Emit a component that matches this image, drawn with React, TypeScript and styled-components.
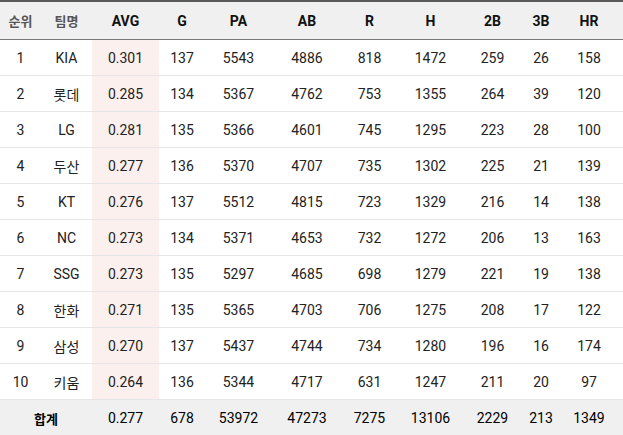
import React from "react";
import styled, { createGlobalStyle } from "styled-components";

const Global = createGlobalStyle`
  html, body { margin: 0; padding: 0; background: #fff; }
  body { font-family: Roboto, "Noto Sans CJK KR", sans-serif; }
`;

const Table = styled.table`
  width: 623px;
  border-collapse: collapse;
  table-layout: fixed;
  border-top: 2px solid #5a5a5a;
  font-family: Roboto, "Noto Sans CJK KR", sans-serif;
  font-size: 14px;
  color: #222;
`;

const HeadCell = styled.th<{ $ko?: boolean; $pr?: number }>`
  height: 37px;
  padding: 0 ${(p) => p.$pr ?? 0}px 0 0;
  background: #f0f0f0;
  border-bottom: 1px solid #7a7a7a;
  text-align: center;
  font-weight: 700;
  font-size: ${(p) => (p.$ko ? "13px" : "14px")};
  color: ${(p) => (p.$ko ? "#555" : "#111")};
`;

const Row = styled.tr`
  border-bottom: 1px solid #e6e6e6;
`;

const Cell = styled.td<{ $hl?: boolean; $pr?: number }>`
  height: 35px;
  padding: 0 ${(p) => p.$pr ?? 0}px 0 0;
  text-align: center;
  background: ${(p) => (p.$hl ? "#fcf0ef" : "transparent")};
  color: #222;
`;

const FootCell = styled.td<{ $pr?: number; $ko?: boolean }>`
  height: 36px;
  padding: 0 ${(p) => p.$pr ?? 0}px 0 0;
  text-align: center;
  background: #f0f0f0;
  font-size: ${(p) => (p.$ko ? "13px" : "14px")};
  font-weight: ${(p) => (p.$ko ? 700 : 400)};
  color: #000;
`;

const widths = [41, 51, 67, 46, 67, 70, 55, 67, 57, 40, 62];
const headers = ["순위", "팀명", "AVG", "G", "PA", "AB", "R", "H", "2B", "3B", "HR"];

const rows: (string | number)[][] = [
  [1, "KIA", "0.301", 137, 5543, 4886, 818, 1472, 259, 26, 158],
  [2, "롯데", "0.285", 134, 5367, 4762, 753, 1355, 264, 39, 120],
  [3, "LG", "0.281", 135, 5366, 4601, 745, 1295, 223, 28, 100],
  [4, "두산", "0.277", 136, 5370, 4707, 735, 1302, 225, 21, 139],
  [5, "KT", "0.276", 137, 5512, 4815, 723, 1329, 216, 14, 138],
  [6, "NC", "0.273", 134, 5371, 4653, 732, 1272, 206, 13, 163],
  [7, "SSG", "0.273", 135, 5297, 4685, 698, 1279, 221, 19, 138],
  [8, "한화", "0.271", 135, 5365, 4703, 706, 1275, 208, 17, 122],
  [9, "삼성", "0.270", 137, 5437, 4744, 734, 1280, 196, 16, 174],
  [10, "키움", "0.264", 136, 5344, 4717, 631, 1247, 211, 20, 97],
];

const totals = ["0.277", 678, 53972, 47273, 7275, 13106, 2229, 213, 1349];

export default function App() {
  return (
    <>
      <Global />
      <Table>
        <colgroup>
          {widths.map((w, i) => (
            <col key={i} style={{ width: w }} />
          ))}
        </colgroup>
        <thead>
          <tr>
            {headers.map((h, i) => (
              <HeadCell key={h} $ko={i < 2} $pr={i === 10 ? 6 : 0}>
                {h}
              </HeadCell>
            ))}
          </tr>
        </thead>
        <tbody>
          {rows.map((r) => (
            <Row key={r[0]}>
              {r.map((v, i) => (
                <Cell key={i} $hl={i === 2} $pr={i === 10 ? 6 : 0}>
                  {v}
                </Cell>
              ))}
            </Row>
          ))}
        </tbody>
        <tfoot>
          <tr>
            <FootCell colSpan={2} $ko>
              합계
            </FootCell>
            {totals.map((v, i) => (
              <FootCell key={i} $pr={i === 8 ? 6 : 0}>
                {v}
              </FootCell>
            ))}
          </tr>
        </tfoot>
      </Table>
    </>
  );
}
